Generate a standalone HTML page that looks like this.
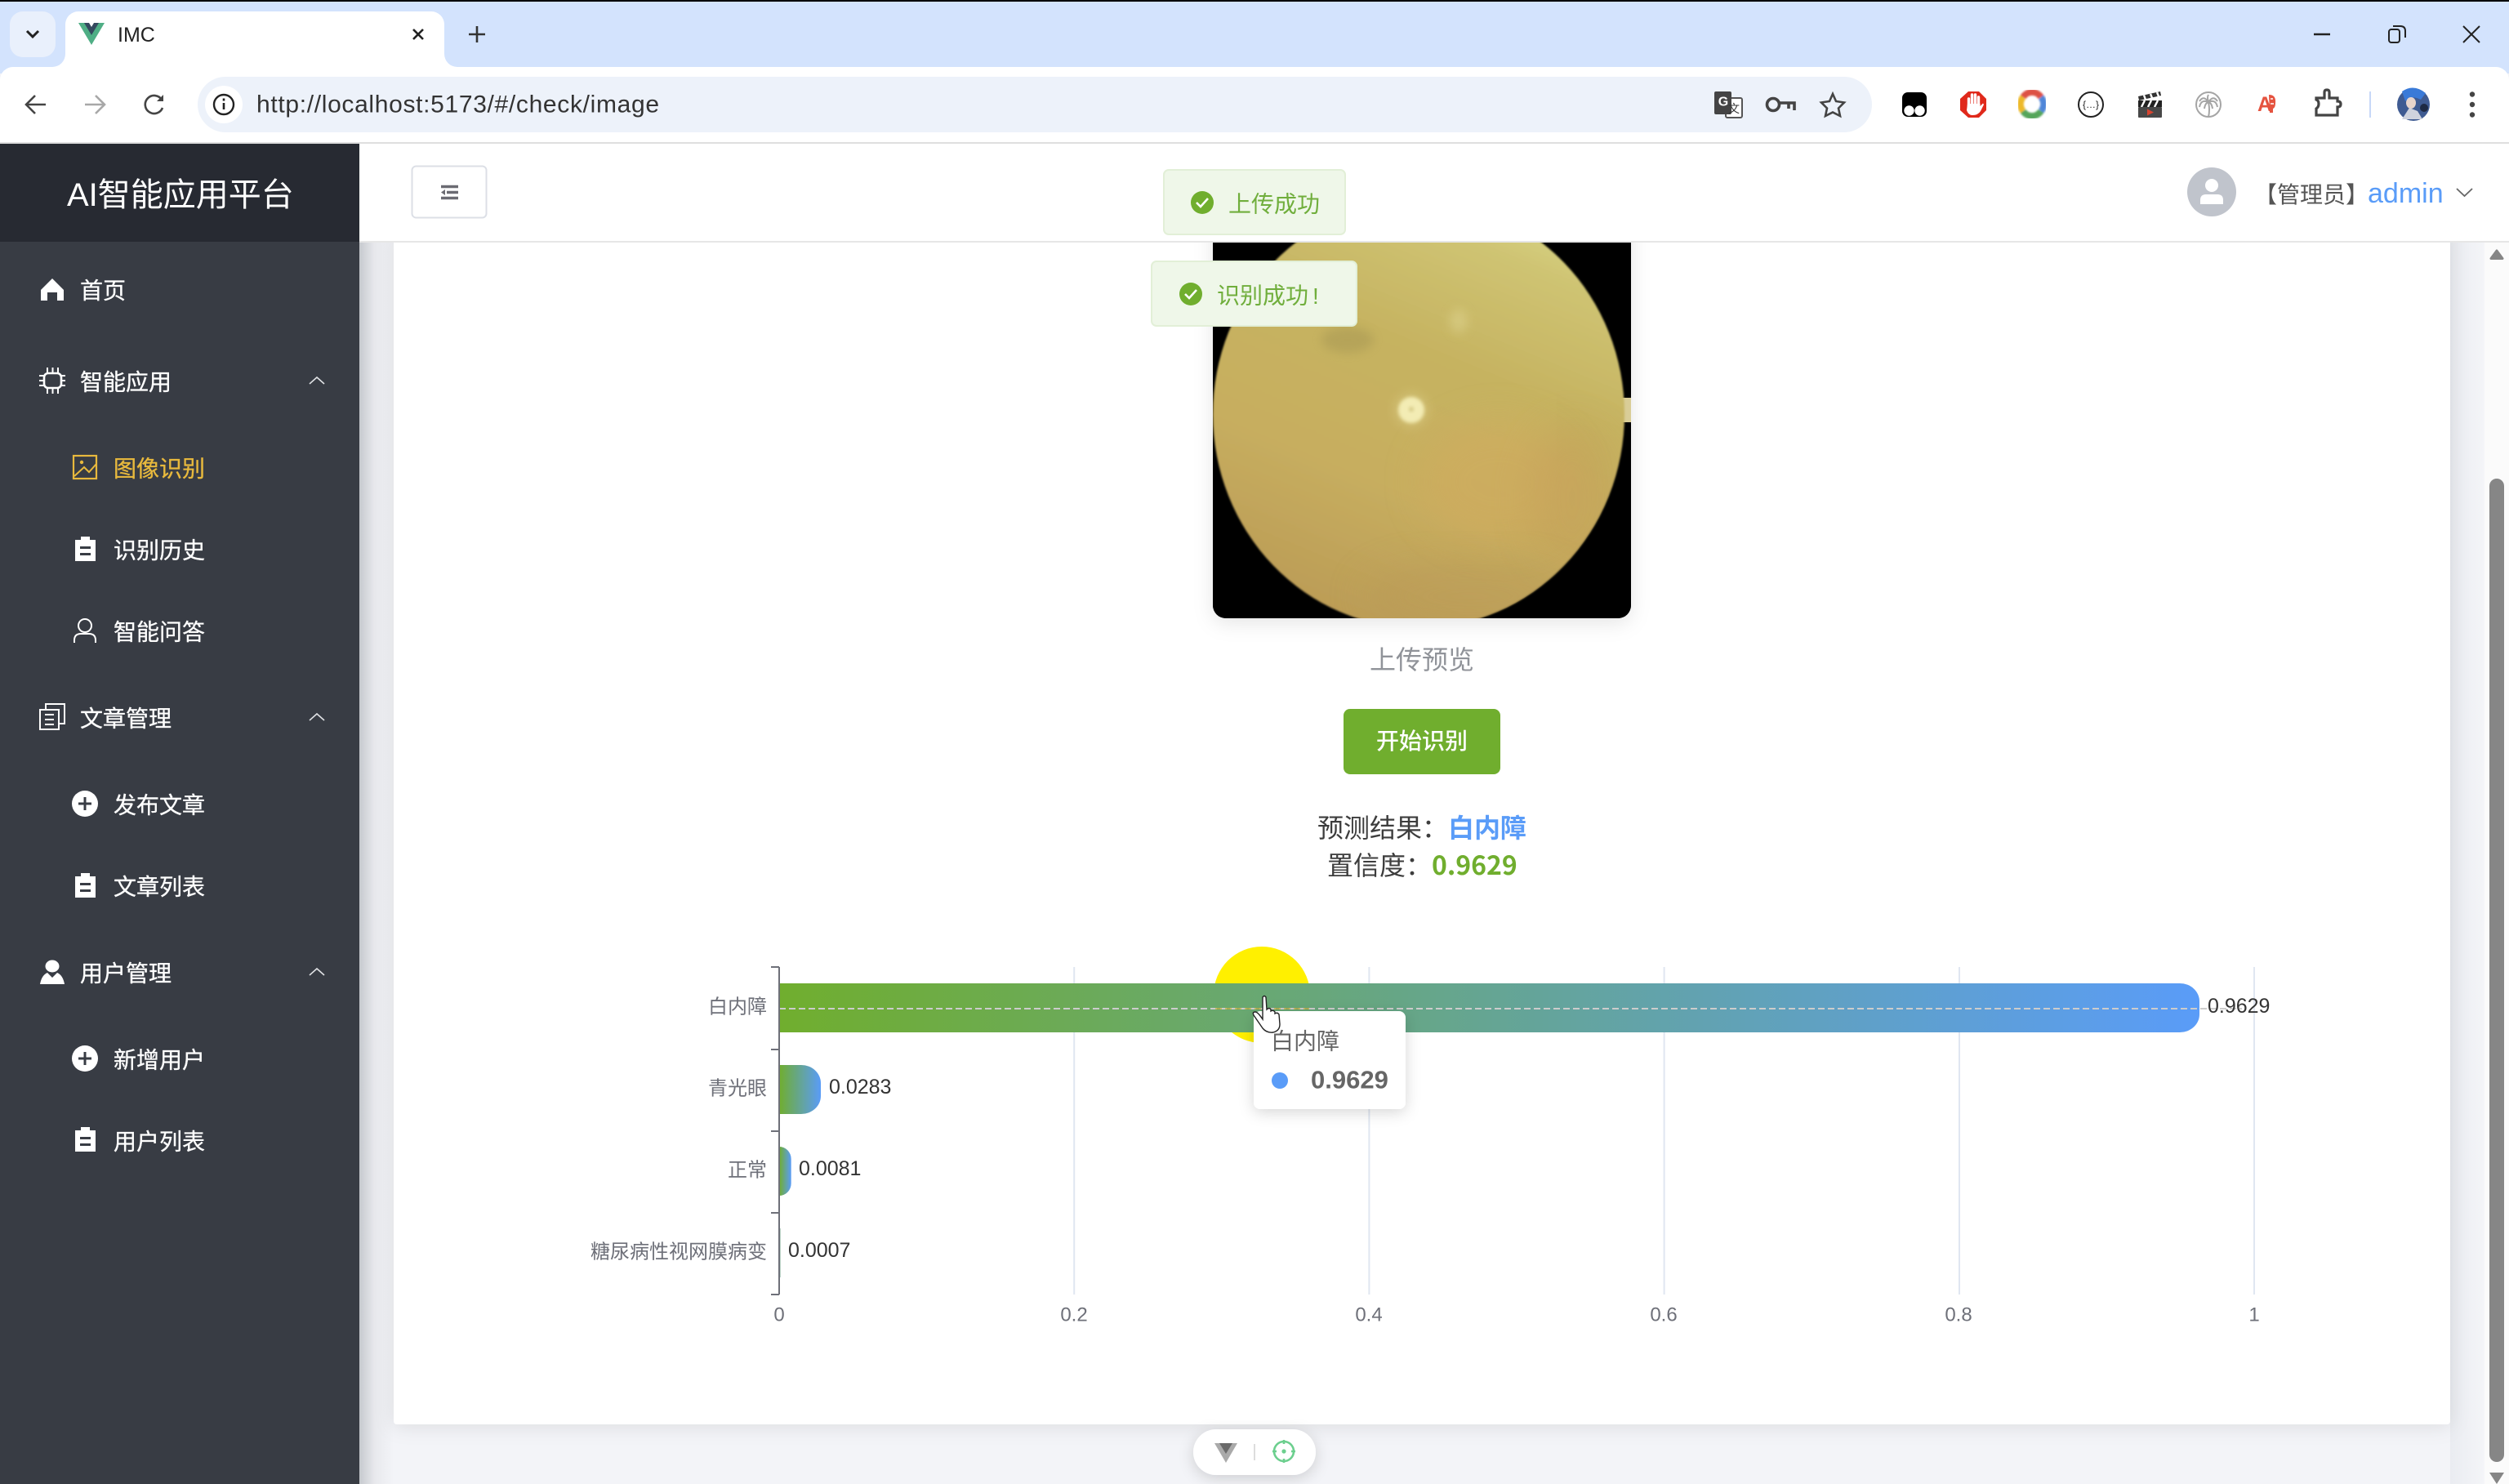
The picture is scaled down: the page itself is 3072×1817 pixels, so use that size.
<!DOCTYPE html>
<html lang="zh-CN"><head><meta charset="utf-8"><title>IMC</title>
<style>
html,body{margin:0;padding:0;background:#f3f4f8;width:3072px;height:1817px;overflow:hidden}
svg{display:block;position:absolute;left:0;top:0}
text{font-family:"Liberation Sans","Noto Sans CJK SC",sans-serif;dominant-baseline:central}
.n{font-family:"Noto Sans CJK SC","Liberation Sans",sans-serif}
.m{fill:#fff;font-size:28px;stroke:#fff;stroke-width:.3px}
.ax{fill:#6e7079;font-size:24px}
.v{fill:#333;font-size:25px}
</style></head><body>
<svg width="3072" height="1817" viewBox="0 0 3072 1817" xmlns="http://www.w3.org/2000/svg">
<defs>
<linearGradient id="bar"><stop offset="0" stop-color="#70ae2e"/><stop offset="1" stop-color="#5a9cf8"/></linearGradient>
<linearGradient id="sh"><stop offset="0" stop-color="#c6c9ce"/><stop offset=".45" stop-color="#e8e9ed"/><stop offset="1" stop-color="#f3f4f8"/></linearGradient>
<linearGradient id="sh2"><stop offset="0" stop-color="#eaecf1"/><stop offset="1" stop-color="#f4f5f8"/></linearGradient>
<linearGradient id="fund" x1=".8" y1="0" x2=".4" y2="1"><stop offset="0" stop-color="#dbdb8c"/><stop offset=".14" stop-color="#cfc473"/><stop offset=".4" stop-color="#c6b361"/><stop offset=".7" stop-color="#c7ae5f"/><stop offset="1" stop-color="#bc9d57"/></linearGradient>
<filter id="b20" x="-50%" y="-50%" width="200%" height="200%"><feGaussianBlur stdDeviation="22"/></filter>
<filter id="b6" x="-50%" y="-50%" width="200%" height="200%"><feGaussianBlur stdDeviation="6"/></filter>
<filter id="b3" x="-50%" y="-50%" width="200%" height="200%"><feGaussianBlur stdDeviation="2"/></filter>
<filter id="bl" x="-2%" y="-3%" width="104%" height="106%"><feGaussianBlur stdDeviation="1"/></filter>
<filter id="b1" x="-10%" y="-10%" width="120%" height="120%"><feGaussianBlur stdDeviation="1"/></filter>
<filter id="cs" x="-3%" y="-3%" width="106%" height="106%"><feDropShadow dx="0" dy="2" stdDeviation="12" flood-color="#000" flood-opacity=".10"/></filter>
<filter id="ims" x="-10%" y="-10%" width="120%" height="120%"><feDropShadow dx="0" dy="6" stdDeviation="12" flood-color="#000" flood-opacity=".10"/></filter>
<filter id="ts" x="-20%" y="-20%" width="140%" height="150%"><feDropShadow dx="0" dy="4" stdDeviation="9" flood-color="#000" flood-opacity=".16"/></filter>
<clipPath id="imc"><rect x="1485" y="245" width="512" height="512" rx="16"/></clipPath>
<clipPath id="eye"><ellipse cx="1737" cy="507" rx="252" ry="262"/></clipPath>
<g id="clip"><rect x="0" y="4" width="25" height="26" fill="#fff"/><rect x="7" y="0" width="11" height="5" fill="#fff"/><rect x="6" y="12" width="13" height="3" fill="#383c44"/><rect x="6" y="20" width="13" height="3" fill="#383c44"/></g>
<g id="plus"><circle r="16" fill="#fff"/><path d="M-8 0H8M0-8V8" stroke="#383c44" stroke-width="3"/></g>
<path id="chev" d="M-9 4L0-4L9 4" fill="none" stroke="#dfe1e4" stroke-width="1.6"/>
</defs>

<!-- page -->
<rect width="3072" height="1817" fill="#f3f4f8"/>
<rect x="440" y="296" width="42" height="1521" fill="url(#sh)"/>
<rect x="3000" y="296" width="42" height="1521" fill="url(#sh2)"/>
<rect x="482" y="280" width="2518" height="1464" rx="4" fill="#fff" filter="url(#cs)"/>

<!-- image -->
<rect x="1485" y="245" width="512" height="512" rx="16" fill="#000" filter="url(#ims)"/>
<g clip-path="url(#imc)">
<rect x="1485" y="245" width="512" height="512" fill="#000"/>
<rect x="1985" y="487" width="12" height="30" fill="#d9cd97"/>
<ellipse cx="1737" cy="507" rx="252" ry="262" fill="url(#fund)" filter="url(#bl)"/>
<g clip-path="url(#eye)">
<ellipse cx="1835" cy="590" rx="95" ry="75" fill="#d1ab5f" opacity=".55" filter="url(#b20)"/>
<ellipse cx="1925" cy="610" rx="55" ry="90" fill="#c49c58" opacity=".4" filter="url(#b20)"/>
<ellipse cx="1800" cy="730" rx="130" ry="40" fill="#ba9a58" opacity=".5" filter="url(#b20)"/>
<ellipse cx="1650" cy="416" rx="32" ry="16" fill="#8f8348" opacity=".3" filter="url(#b6)"/>
<ellipse cx="1786" cy="393" rx="11" ry="15" fill="#ded38e" opacity=".55" filter="url(#b6)"/>
<circle cx="1728" cy="502" r="22" fill="#ddd08a" opacity=".4" filter="url(#b6)"/>
<ellipse cx="1728" cy="502" rx="16" ry="16" fill="#f3ecb4" filter="url(#b3)"/>
<circle cx="1728" cy="501" r="2.6" fill="#cdbf78" filter="url(#b3)"/>
</g>
</g>
<text x="1741" y="808" text-anchor="middle" font-size="32" fill="#909399">上传预览</text>
<rect x="1645" y="868" width="192" height="80" rx="8" fill="#70ae2e"/>
<text x="1741" y="906" text-anchor="middle" font-size="28" font-weight="500" fill="#fff" class="n">开始识别</text>
<text x="1613" y="1012" font-size="32" fill="#3d3d3d" class="n">预测结果：</text>
<text x="1773" y="1012" font-size="32" font-weight="700" fill="#5a9cf8" class="n">白内障</text>
<text x="1625" y="1058" font-size="32" fill="#3d3d3d" class="n">置信度：</text>
<text x="1753" y="1058" font-size="32" font-weight="700" fill="#70ae2e" class="n">0.9629</text>

<!-- chart -->
<g stroke="#e0e6f1" stroke-width="2"><path d="M1315.200 1184V1585M1676.400 1184V1585M2037.600 1184V1585M2399 1184V1585M2760 1184V1585"/></g>
<circle cx="1545" cy="1218" r="59" fill="#fff000"/>
<path d="M954 1204H2669a24 22 0 0 1 24 22v16a24 22 0 0 1-24 22H954z" fill="url(#bar)"/>
<path d="M954 1304H981a24 22 0 0 1 24 22v16a24 22 0 0 1-24 22H954z" fill="url(#bar)"/>
<path d="M954 1404a14.7 15 0 0 1 14.7 15v30a14.7 15 0 0 1-14.7 15z" fill="url(#bar)"/>
<rect x="954" y="1504" width="1.4" height="60" fill="#5f9a7c"/>
<path d="M954 1235H2745" stroke="#ccc" stroke-width="2" stroke-dasharray="8 4"/>
<path d="M1488 1235H1603" stroke="#c5b040" stroke-width="2" stroke-dasharray="8 4" opacity=".7"/>
<path d="M954 1184V1585M944 1184H954M944 1285H954M944 1385H954M944 1485H954M944 1585H954" stroke="#6e7079" stroke-width="2" fill="none"/>
<text x="939" y="1233" text-anchor="end" class="ax">白内障</text>
<text x="939" y="1333" text-anchor="end" class="ax">青光眼</text>
<text x="939" y="1433" text-anchor="end" class="ax">正常</text>
<text x="939" y="1533" text-anchor="end" class="ax">糖尿病性视网膜病变</text>
<text x="954" y="1610" text-anchor="middle" class="ax">0</text>
<text x="1315" y="1610" text-anchor="middle" class="ax">0.2</text>
<text x="1676" y="1610" text-anchor="middle" class="ax">0.4</text>
<text x="2037" y="1610" text-anchor="middle" class="ax">0.6</text>
<text x="2398" y="1610" text-anchor="middle" class="ax">0.8</text>
<text x="2760" y="1610" text-anchor="middle" class="ax">1</text>
<text x="2703" y="1232" class="v">0.9629</text>
<text x="1015" y="1331" class="v">0.0283</text>
<text x="978" y="1431" class="v">0.0081</text>
<text x="965" y="1531" class="v">0.0007</text>

<!-- tooltip -->
<rect x="1535" y="1238" width="186" height="120" rx="8" fill="#fff" filter="url(#ts)"/>
<text x="1556" y="1275" font-size="28" fill="#666">白内障</text>
<circle cx="1567" cy="1323" r="10" fill="#5a9cf8"/>
<text x="1605" y="1322" font-size="31" font-weight="700" fill="#666">0.9629</text>
<!-- cursor -->
<path transform="translate(1533 1218)" d="M13 3Q15 0 17 3L18 18Q21 15 23 18L23 20Q26 18 28 21L28 23Q31 21 33 24L34 36Q34 44 26 46Q18 47 13 41L2 25Q0 21 4 21Q7 21 13 30Z" fill="#fff" stroke="#222" stroke-width="1.4"/>

<!-- scrollbar -->
<rect x="3042" y="296" width="30" height="1521" fill="#fbfbfb"/>
<path d="M3057 307L3064 316.500H3050Z" fill="#868686" stroke="#868686" stroke-width="3" stroke-linejoin="round"/>
<rect x="3048" y="586" width="18" height="1204" rx="9" fill="#868686"/>
<path d="M3048 1803H3066L3057 1817Z" fill="#868686"/>

<!-- bottom pill -->
<rect x="1461" y="1750" width="150" height="56" rx="28" fill="#fff" filter="url(#ts)"/>
<path d="M1487 1767H1515L1501 1791Z" fill="#aaa"/>
<path d="M1493 1767H1509L1501 1780Z" fill="#6a6a6a"/>
<path d="M1536 1768V1788" stroke="#ddd" stroke-width="2"/>
<circle cx="1572" cy="1777" r="12" fill="none" stroke="#6ccf8e" stroke-width="2.6"/>
<circle cx="1572" cy="1777" r="2.6" fill="#6ccf8e"/>
<path d="M1572 1763V1768M1572 1786V1791M1558 1777H1563M1581 1777H1586" stroke="#6ccf8e" stroke-width="2.6"/>

<!-- app header -->
<rect x="440" y="176" width="2632" height="119" fill="#fff"/>
<rect x="440" y="295" width="2632" height="2" fill="#e6e6e6"/>
<rect x="504.500" y="203.500" width="91" height="63" rx="5" fill="#fff" stroke="#dcdfe6" stroke-width="2"/>
<path d="M540 228.500H561M547 235.500H561M540 242.500H561" stroke="#6b6b72" stroke-width="3.4"/>
<path d="M545 232L540 235.500L545 239Z" fill="#6b6b72"/>
<circle cx="2708" cy="235" r="30" fill="#c0c4cc"/>
<circle cx="2708" cy="227" r="8" fill="#fff"/>
<path d="M2694 250V245Q2694 238 2701 238H2715Q2722 238 2722 245V250Z" fill="#fff"/>
<text x="2760" y="237" font-size="28" fill="#555" class="n">【管理员】</text>
<text x="2899" y="237" font-size="34" fill="#5a9cf8">admin</text>
<path d="M3008 231L3017.500 240L3027 231" fill="none" stroke="#666" stroke-width="1.8"/>

<!-- toasts -->
<rect x="1425" y="208" width="222" height="79" rx="6" fill="#eff7e9" stroke="#e2efd7" stroke-width="2"/>
<circle cx="1472" cy="248" r="14" fill="#70ae2e"/>
<path d="M1465 248L1470 253L1479 243" fill="none" stroke="#fff" stroke-width="2.6"/>
<text x="1504" y="250" font-size="28" fill="#70ae3c">上传成功</text>
<rect x="1410" y="320" width="251" height="79" rx="6" fill="#eff7e9" stroke="#e2efd7" stroke-width="2"/>
<circle cx="1458" cy="360" r="14" fill="#70ae2e"/>
<path d="M1451 360L1456 365L1465 355" fill="none" stroke="#fff" stroke-width="2.6"/>
<text x="1490" y="362" font-size="28" fill="#70ae3c">识别成功<tspan dx="5">!</tspan></text>

<!-- browser chrome -->
<rect x="0" y="0" width="3072" height="90" fill="#d3e3fd"/>
<rect x="0" y="0" width="3072" height="2" fill="#000"/>
<rect x="12" y="14" width="56" height="56" rx="16" fill="#e9f0fc"/>
<path d="M33 38L40 45L47 38" fill="none" stroke="#222" stroke-width="3"/>
<path d="M64 82a16 16 0 0 0 16-16V30a16 16 0 0 1 16-16H528a16 16 0 0 1 16 16V66a16 16 0 0 0 16 16Z" fill="#fff"/>
<path d="M96 28H104L112 42L120 28H128L112 55Z" fill="#4fae85"/>
<path d="M103 28H109L112 33L115 28H121L112 43Z" fill="#34495e"/>
<text x="144" y="43" font-size="25" fill="#222">IMC</text>
<path d="M506 36L518 48M518 36L506 48" stroke="#222" stroke-width="2.6"/>
<path d="M574 42H594M584 32V52" stroke="#333" stroke-width="2.6"/>
<path d="M2833 42H2853" stroke="#222" stroke-width="2.4"/>
<rect x="2925" y="36" width="13" height="16" rx="3" fill="none" stroke="#222" stroke-width="2"/>
<path d="M2930 32H2939Q2945 32 2945 38V46" fill="none" stroke="#222" stroke-width="2"/>
<path d="M3016 32L3036 52M3036 32L3016 52" stroke="#222" stroke-width="2"/>

<path d="M0 174V98a16 16 0 0 1 16-16H3056a16 16 0 0 1 16 16V174Z" fill="#fff"/>
<rect x="0" y="174" width="3072" height="2" fill="#dfdfdf"/>
<path d="M56 128H33M43 117L32 128L43 139" fill="none" stroke="#444" stroke-width="2.6"/>
<path d="M104 128H127M117 117L128 128L117 139" fill="none" stroke="#a8a8a8" stroke-width="2.6"/>
<path d="M198 122A11 11 0 1 0 199 132" fill="none" stroke="#444" stroke-width="2.6"/>
<path d="M200 116V124H192Z" fill="#444"/>

<rect x="242" y="94" width="2050" height="68" rx="34" fill="#edf2fa"/>
<circle cx="274" cy="128" r="23" fill="#fff"/>
<circle cx="274" cy="128" r="12" fill="none" stroke="#222" stroke-width="2.4"/>
<path d="M274 126V134M274 120.500V123.500" stroke="#222" stroke-width="2.6"/>
<text x="314" y="128" font-size="30" fill="#333" textLength="493" lengthAdjust="spacing">http://localhost:5173/#/check/image</text>

<rect x="2113" y="120" width="20" height="24" rx="2" fill="#fff" stroke="#555" stroke-width="2"/>
<rect x="2099" y="112" width="21" height="28" rx="2" fill="#444"/>
<text x="2110" y="125" font-size="16" font-weight="700" text-anchor="middle" fill="#fff">G</text>
<text x="2123" y="133" font-size="14" text-anchor="middle" fill="#333">文</text>
<circle cx="2171" cy="128" r="7.500" fill="none" stroke="#444" stroke-width="3.6"/>
<path d="M2178 126H2197V135M2190 127V133" fill="none" stroke="#444" stroke-width="3.6"/>
<path d="M2244 115L2248 124L2258 125.500L2251 132.500L2253 142L2244 137.500L2235 142L2237 132.500L2230 125.500L2240 124Z" fill="none" stroke="#444" stroke-width="2.6"/>

<!-- extension icons -->
<rect x="2329" y="113" width="30" height="30" rx="7" fill="#000"/>
<circle cx="2337.500" cy="135.500" r="6.200" fill="#fff"/><circle cx="2350.500" cy="135.500" r="6.200" fill="#fff"/>
<path d="M2410 112H2423L2432 121V135L2423 144H2410L2400 135V121Z" fill="#e0291b"/>
<path d="M2410.500 130V121M2414.500 130V116M2418.500 130V116M2422.500 130V119" stroke="#fff" stroke-width="3.4" stroke-linecap="round"/>
<path d="M2409 127H2424.500V130L2428 126.500L2429 128L2425 136Q2422 141 2415 141Q2410 141 2408 135Z" fill="#fff"/>
<g fill="none" stroke-width="8" filter="url(#b1)">
<path d="M2477 119A13 13 0 0 1 2499 119" stroke="#dd5144"/>
<path d="M2499 119A13 13 0 0 1 2499 136" stroke="#4f86d8"/>
<path d="M2499 136A13 13 0 0 1 2477 136" stroke="#55a55a"/>
<path d="M2477 136A13 13 0 0 1 2477 119" stroke="#edb92c"/>
</g>
<circle cx="2560" cy="128" r="15" fill="#fff" stroke="#222" stroke-width="2"/>
<text x="2560" y="128" font-size="12" text-anchor="middle" fill="#222">{…}</text>
<path d="M2618 118L2645 112L2646 117L2619 123Z" fill="#333"/>
<path d="M2625 116.500L2627 122M2633 115L2635 120M2641 113L2643 118" stroke="#fff" stroke-width="2.4"/>
<rect x="2618" y="123" width="29" height="8" fill="#222"/>
<path d="M2622 131L2626 123M2630 131L2634 123M2638 131L2642 123" stroke="#fff" stroke-width="2.4"/>
<rect x="2618" y="131" width="29" height="13" rx="1" fill="#484848"/>
<path d="M2629 133.500L2637 137.500L2629 141.500Z" fill="#d8432f"/>
<circle cx="2704" cy="128" r="15" fill="#fff" stroke="#a5a5a5" stroke-width="2"/>
<path d="M2704 125Q2706 135 2704 143M2704 125Q2698 116 2693 124M2704 125Q2710 116 2715 124M2704 125Q2695 121 2693 131M2704 125Q2713 121 2715 131M2704 125Q2702 119 2704 116M2704 125Q2700 126 2699 133M2704 125Q2708 126 2709 133" stroke="#a5a5a5" stroke-width="2" fill="none"/>
<text x="2764" y="128" font-size="25" font-weight="700" fill="#e5533f">A</text>
<path d="M2778 116Q2787 116 2786 126Q2786 132 2783 133V138H2779Z" fill="#e5533f"/>
<path d="M2780 121H2783M2780 127H2784" stroke="#fff" stroke-width="1.4"/>
<path d="M2836 120H2846V113Q2846 110 2849 110Q2852 110 2852 113V120H2862V124Q2866 124 2866 127.500Q2866 131 2862 131V141H2836V133Q2839 131 2839 127Q2839 123 2836 122Z" fill="none" stroke="#444" stroke-width="3.2"/>
<rect x="2901" y="112" width="2" height="32" fill="#c7d8f8"/>
<ellipse cx="2955" cy="128" rx="20" ry="20" fill="#3f5b92"/>
<path d="M2941 112Q2955 102 2970 114L2964 122Q2952 116 2945 124Z" fill="#3a7ad8"/>
<ellipse cx="2952" cy="126" rx="6" ry="7" fill="#e7d4cb"/>
<path d="M2941 146L2950 132L2960 136L2966 146Z" fill="#cfd3de"/>
<circle cx="2968" cy="132" r="5" fill="#1e2a44"/>
<circle cx="3027" cy="115.500" r="3.200" fill="#444"/><circle cx="3027" cy="128" r="3.200" fill="#444"/><circle cx="3027" cy="140.500" r="3.200" fill="#444"/>

<!-- sidebar -->
<rect x="0" y="176" width="440" height="1641" fill="#383c44"/>
<rect x="0" y="176" width="440" height="120" fill="#272a32"/>
<text x="82" y="239" font-size="40" fill="#fff">AI智能应用平台</text>

<path d="M64 341L78 355V368H70V358H58V368H50V355Z" fill="#fff"/>
<text x="98" y="356" class="m">首页</text>

<rect x="54" y="457" width="21" height="18" rx="5" fill="none" stroke="#fff" stroke-width="2.6"/>
<path d="M58 450V456M64.500 450V456M71 450V456M58 476V482M64.500 476V482M71 476V482M48 460H54M48 466H54M48 472H54M75 460H80M75 466H80M75 472H80" stroke="#fff" stroke-width="2"/>
<text x="98" y="468" class="m">智能应用</text>
<use href="#chev" x="388" y="466"/>

<rect x="90" y="558" width="28" height="28" fill="none" stroke="#e8b93d" stroke-width="2.2"/>
<circle cx="100" cy="566" r="2.2" fill="#e8b93d"/>
<path d="M91 583L103 572L109 578L118 568" fill="none" stroke="#e8b93d" stroke-width="2"/>
<text x="139" y="574" font-size="28" fill="#e8b93d" stroke="#e8b93d" stroke-width=".3">图像识别</text>

<use href="#clip" x="92" y="657"/>
<text x="139" y="674" class="m">识别历史</text>

<circle cx="104" cy="766" r="8" fill="none" stroke="#fff" stroke-width="2"/>
<path d="M91 787V784Q91 776 99 776H109Q117 776 117 784V787" fill="none" stroke="#fff" stroke-width="2"/>
<text x="139" y="774" class="m">智能问答</text>

<rect x="49" y="869" width="23" height="24" fill="none" stroke="#fff" stroke-width="2"/>
<path d="M56 868V862H79V886H72M55 875H66M55 881H66M55 887H66" fill="none" stroke="#fff" stroke-width="2"/>
<text x="98" y="880" class="m">文章管理</text>
<use href="#chev" x="388" y="878"/>

<use href="#plus" x="104" y="984"/>
<text x="139" y="986" class="m">发布文章</text>
<use href="#clip" x="92" y="1069"/>
<text x="139" y="1086" class="m">文章列表</text>

<ellipse cx="64" cy="1183" rx="8.500" ry="7.500" fill="#fff"/>
<path d="M49 1205Q51 1194 58 1191L64 1197L70 1191Q77 1194 79 1205Z" fill="#fff"/>
<text x="98" y="1192" class="m">用户管理</text>
<use href="#chev" x="388" y="1190"/>

<use href="#plus" x="104" y="1296"/>
<text x="139" y="1298" class="m">新增用户</text>
<use href="#clip" x="92" y="1380"/>
<text x="139" y="1398" class="m">用户列表</text>
</svg>
</body></html>
